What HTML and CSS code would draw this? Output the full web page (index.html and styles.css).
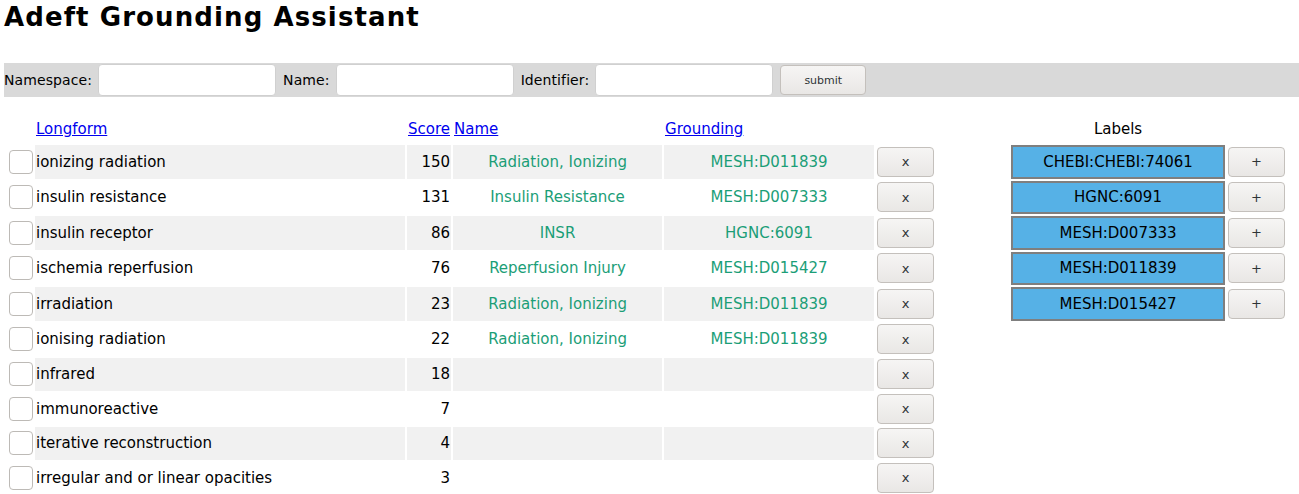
FILE: index.html
```html
<!DOCTYPE html>
<html>
<head>
<meta charset="utf-8">
<link rel="stylesheet" href="styles.css">
</head>
<body>
<h1 class="title">Adeft Grounding Assistant</h1>
<form class="bar">
  <label class="lbl">Namespace:</label><input class="field" type="text">
  <label class="lbl">Name:</label><input class="field" type="text">
  <label class="lbl">Identifier:</label><input class="field" type="text">
  <button class="btn submit" type="button">submit</button>
</form>
<div class="content">
  <table class="main">
    <thead>
      <tr>
        <th class="c-chk"></th>
        <th class="c-long"><a href="#">Longform</a></th>
        <th class="c-score"><a href="#">Score</a></th>
        <th class="c-name"><a href="#">Name</a></th>
        <th class="c-grnd"><a href="#">Grounding</a></th>
        <th class="c-btn"></th>
      </tr>
    </thead>
    <tbody>
      <tr class="odd"><td class="c-chk"><span class="chk"></span></td><td class="c-long">ionizing radiation</td><td class="c-score">150</td><td class="c-name g">Radiation, Ionizing</td><td class="c-grnd g">MESH:D011839</td><td class="c-btn"><button class="btn x" type="button">x</button></td></tr>
      <tr><td class="c-chk"><span class="chk"></span></td><td class="c-long">insulin resistance</td><td class="c-score">131</td><td class="c-name g">Insulin Resistance</td><td class="c-grnd g">MESH:D007333</td><td class="c-btn"><button class="btn x" type="button">x</button></td></tr>
      <tr class="odd"><td class="c-chk"><span class="chk"></span></td><td class="c-long">insulin receptor</td><td class="c-score">86</td><td class="c-name g">INSR</td><td class="c-grnd g">HGNC:6091</td><td class="c-btn"><button class="btn x" type="button">x</button></td></tr>
      <tr><td class="c-chk"><span class="chk"></span></td><td class="c-long">ischemia reperfusion</td><td class="c-score">76</td><td class="c-name g">Reperfusion Injury</td><td class="c-grnd g">MESH:D015427</td><td class="c-btn"><button class="btn x" type="button">x</button></td></tr>
      <tr class="odd"><td class="c-chk"><span class="chk"></span></td><td class="c-long">irradiation</td><td class="c-score">23</td><td class="c-name g">Radiation, Ionizing</td><td class="c-grnd g">MESH:D011839</td><td class="c-btn"><button class="btn x" type="button">x</button></td></tr>
      <tr><td class="c-chk"><span class="chk"></span></td><td class="c-long">ionising radiation</td><td class="c-score">22</td><td class="c-name g">Radiation, Ionizing</td><td class="c-grnd g">MESH:D011839</td><td class="c-btn"><button class="btn x" type="button">x</button></td></tr>
      <tr class="odd short"><td class="c-chk"><span class="chk"></span></td><td class="c-long">infrared</td><td class="c-score">18</td><td class="c-name g"></td><td class="c-grnd g"></td><td class="c-btn"><button class="btn x" type="button">x</button></td></tr>
      <tr class="short"><td class="c-chk"><span class="chk"></span></td><td class="c-long">immunoreactive</td><td class="c-score">7</td><td class="c-name g"></td><td class="c-grnd g"></td><td class="c-btn"><button class="btn x" type="button">x</button></td></tr>
      <tr class="odd short"><td class="c-chk"><span class="chk"></span></td><td class="c-long">iterative reconstruction</td><td class="c-score">4</td><td class="c-name g"></td><td class="c-grnd g"></td><td class="c-btn"><button class="btn x" type="button">x</button></td></tr>
      <tr class="short"><td class="c-chk"><span class="chk"></span></td><td class="c-long">irregular and or linear opacities</td><td class="c-score">3</td><td class="c-name g"></td><td class="c-grnd g"></td><td class="c-btn"><button class="btn x" type="button">x</button></td></tr>
    </tbody>
  </table>
  <table class="labels">
    <thead>
      <tr><th class="l-head">Labels</th><th></th></tr>
    </thead>
    <tbody>
      <tr><td class="label">CHEBI:CHEBI:74061</td><td class="l-btn"><button class="btn plus" type="button">+</button></td></tr>
      <tr><td class="label">HGNC:6091</td><td class="l-btn"><button class="btn plus" type="button">+</button></td></tr>
      <tr><td class="label">MESH:D007333</td><td class="l-btn"><button class="btn plus" type="button">+</button></td></tr>
      <tr><td class="label">MESH:D011839</td><td class="l-btn"><button class="btn plus" type="button">+</button></td></tr>
      <tr><td class="label">MESH:D015427</td><td class="l-btn"><button class="btn plus" type="button">+</button></td></tr>
    </tbody>
  </table>
</div>
</body>
</html>
```

FILE: styles.css
```css
html, body {
  margin: 0;
  padding: 0;
  background: #ffffff;
}
body {
  font-family: "DejaVu Sans", Verdana, sans-serif;
  font-size: 15px;
  color: #000;
  padding: 0 0 0 4px;
}
.title {
  margin: 0;
  padding-top: 1px;
  font-size: 26px;
  line-height: 32px;
  font-weight: bold;
  letter-spacing: 1.1px;
  height: 62px;
}
.bar {
  display: flex;
  align-items: center;
  background: #d9d9d9;
  height: 34px;
  margin: 0;
}
.lbl {
  font-size: 14px;
  margin-right: 6px;
  letter-spacing: 0.1px;
}
.field {
  box-sizing: border-box;
  width: 178px;
  height: 32px;
  border: 1px solid #d0d0d0;
  border-radius: 4px;
  background: #fff;
  margin: 0 7px 0 0;
  padding: 0 4px;
}
.btn {
  box-sizing: border-box;
  font-family: "DejaVu Sans", Verdana, sans-serif;
  border: 1px solid #c4c0bc;
  border-radius: 4px;
  background: linear-gradient(#f6f5f4, #e9e7e5);
  color: #2e3436;
  padding: 0;
  cursor: pointer;
}
.submit {
  width: 86px;
  height: 30px;
  font-size: 11px;
}
.content {
  display: flex;
  align-items: flex-start;
  margin-top: 21px;
}
.main {
  border-collapse: separate;
  border-spacing: 2px;
  margin-left: 3px;
}
.main th {
  font-weight: normal;
  height: 23px;
  padding: 0 1px;
  vertical-align: top;
  text-align: left;
}
.main th.c-score {
  text-align: right;
}
.main a {
  color: #0000ee;
  text-decoration: underline;
}
.main td {
  height: 33.5px;
  padding: 0 1px;
  vertical-align: middle;
}
.main tr.short td {
  height: 32.5px;
}
.main tr.odd td {
  background: #f1f1f1;
}
.main tr.odd td.c-btn {
  background: #fff;
}
.c-chk {
  width: 24px;
  padding: 0 !important;
}
.chk {
  display: block;
  box-sizing: border-box;
  width: 24px;
  height: 24px;
  border: 1px solid #bdbab6;
  border-radius: 4px;
  background: #fff;
}
.main tr.odd td.c-chk {
  background: #fff;
}
.c-long { width: 368px; }
.c-score { width: 41px; text-align: right; }
.c-name { width: 207px; text-align: center; }
.c-grnd { width: 208px; text-align: center; }
.c-btn { width: 59px; padding: 0 !important; }
.g { color: #1b9e77; }
.x {
  width: 57px;
  height: 30px;
  font-size: 13px;
  display: block;
  margin-left: 1px;
}
.labels {
  border-collapse: separate;
  border-spacing: 3px 2px;
  margin-left: 71px;
}
.labels th {
  font-weight: normal;
  height: 23px;
  padding: 0;
  vertical-align: top;
}
.l-head {
  text-align: center;
}
.label {
  box-sizing: border-box;
  width: 214px;
  height: 33.5px;
  background: #56b1e6;
  border: 2px solid #7f7f7f;
  text-align: center;
  padding: 0;
  color: #000;
}
.l-btn {
  padding: 0;
  vertical-align: middle;
}
.plus {
  width: 57px;
  height: 30px;
  font-size: 13px;
  display: block;
}
```
